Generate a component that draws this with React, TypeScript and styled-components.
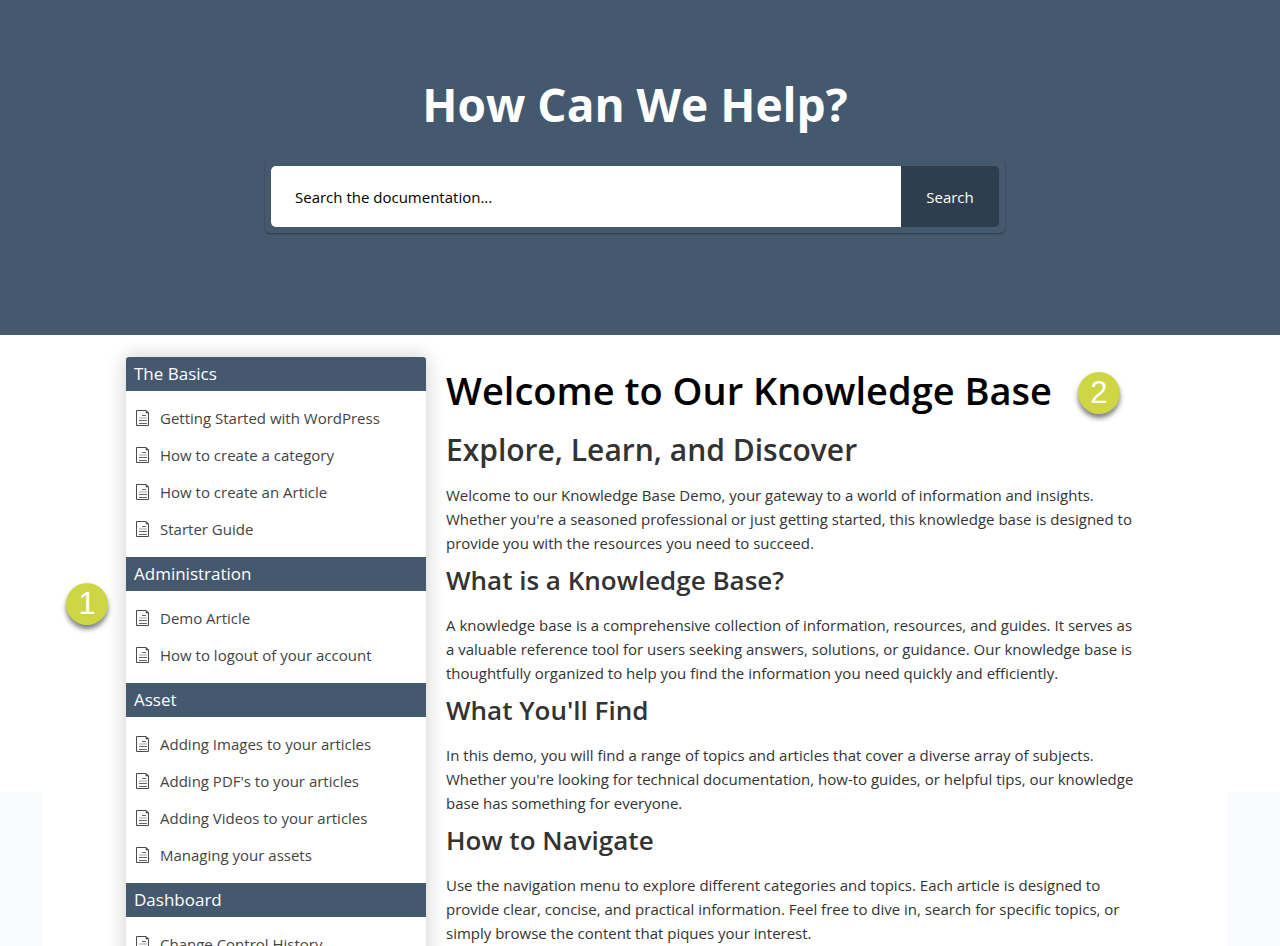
import React from "react";
import styled, { createGlobalStyle } from "styled-components";

const slate = "#44586e";

const GlobalStyle = createGlobalStyle`
  * { box-sizing: border-box; }
  body {
    margin: 0;
    background: #fafbff;
    color: #333;
    font: 15px/24px "Open Sans", "Noto Sans", sans-serif;
  }
`;

const Page = styled.div`
  height: 100vh;
  overflow: hidden;
`;

const Hero = styled.header`
  display: flex;
  flex-direction: column;
  align-items: center;
  padding: 72px 10px 102px 0;
  background: ${slate};
`;

const HeroTitle = styled.h1`
  margin: 0 0 24px;
  color: #fff;
  font-size: 46px;
  line-height: 64px;
  font-weight: 700;
`;

const SearchForm = styled.form`
  display: flex;
  width: 100%;
  max-width: 740px;
  padding: 6px;
  border-radius: 5px;
  box-shadow: 0 1px 2px rgba(0, 0, 0, 0.35);
`;

const SearchInput = styled.input`
  flex: 1;
  min-width: 0;
  height: 61px;
  padding: 0 24px;
  border: 0;
  border-radius: 5px 0 0 5px;
  background: #fff;
  font: inherit;
  color: #000;
  &::placeholder {
    color: #000;
    opacity: 1;
  }
`;

const SearchButton = styled.button`
  width: 98px;
  padding: 0;
  border: 0;
  border-radius: 0 5px 5px 0;
  background: #2f3e4e;
  color: #fff;
  font: inherit;
`;

const Body = styled.main`
  padding-right: 10px;
  background: linear-gradient(#fff, #fff) top / 100% 457px no-repeat;
`;

const Sheet = styled.div`
  max-width: 1184px;
  margin: 0 auto;
  padding: 22px 83px 40px;
  background: #fff;
`;

const Columns = styled.div`
  display: flex;
  align-items: flex-start;
  gap: 20px;
`;

const Sidebar = styled.nav`
  position: relative;
  flex: none;
  width: 300px;
  border-radius: 3px;
  background: #fff;
  box-shadow: 0 0 20px rgba(0, 0, 0, 0.2);
`;

const GroupTitle = styled.h2`
  margin: 0;
  padding: 0 8px;
  background: ${slate};
  color: #fff;
  font-size: 17px;
  line-height: 34px;
  font-weight: 400;
  section:first-of-type > & {
    border-radius: 3px 3px 0 0;
  }
`;

const ArticleList = styled.ul`
  margin: 0;
  padding: 8px 10px 10px;
  list-style: none;
`;

const ArticleLink = styled.a`
  display: flex;
  align-items: center;
  gap: 10px;
  height: 37px;
  color: #444;
  text-decoration: none;
  white-space: nowrap;
`;

const Article = styled.article`
  flex: 1;
  min-width: 0;
  padding-top: 9px;
`;

const TitleRow = styled.div`
  display: flex;
  align-items: flex-end;
  gap: 26px;
`;

const Title = styled.h1`
  margin: 0;
  color: #000;
  font-size: 38px;
  line-height: 48px;
  font-weight: 600;
`;

const Subtitle = styled.h2`
  margin: 17px 0 14px;
  font-size: 30px;
  line-height: 38px;
  font-weight: 600;
`;

const SectionTitle = styled.h3`
  margin: 8px 0 16px;
  font-size: 26px;
  line-height: 34px;
  font-weight: 600;
`;

const Text = styled.p`
  margin: 0;
`;

const Badge = styled.span`
  flex: none;
  width: 42px;
  height: 42px;
  border-radius: 50%;
  background: #ced644;
  box-shadow: 0 4px 5px rgba(0, 0, 0, 0.5);
  color: #fff;
  font: 31px/42px "Liberation Sans", sans-serif;
  text-align: center;
`;

const SidebarBadge = styled(Badge)`
  position: absolute;
  top: 226px;
  left: -60px;
`;

const DocIcon = () => (
  <svg width="14" height="16" viewBox="0 0 14 16" fill="none" stroke="#4a4a4a" aria-hidden="true">
    <path d="M.5.5H10L12.5 3V15.5H.5Z" />
    <path d="M10 .5V3H12.5Z" fill="#4a4a4a" strokeOpacity=".6" />
    <path d="M6 5.5H10M3 10.5H11M3 13.5H11" strokeOpacity=".85" />
    <path d="M3 8H11" strokeOpacity=".5" />
  </svg>
);

const groups = [
  {
    title: "The Basics",
    items: ["Getting Started with WordPress", "How to create a category", "How to create an Article", "Starter Guide"],
  },
  { title: "Administration", items: ["Demo Article", "How to logout of your account"] },
  {
    title: "Asset",
    items: [
      "Adding Images to your articles",
      "Adding PDF's to your articles",
      "Adding Videos to your articles",
      "Managing your assets",
    ],
  },
  { title: "Dashboard", items: ["Change Control History"] },
];

const sections = [
  {
    title: "What is a Knowledge Base?",
    text: "A knowledge base is a comprehensive collection of information, resources, and guides. It serves as a valuable reference tool for users seeking answers, solutions, or guidance. Our knowledge base is thoughtfully organized to help you find the information you need quickly and efficiently.",
  },
  {
    title: "What You'll Find",
    text: "In this demo, you will find a range of topics and articles that cover a diverse array of subjects. Whether you're looking for technical documentation, how-to guides, or helpful tips, our knowledge base has something for everyone.",
  },
  {
    title: "How to Navigate",
    text: "Use the navigation menu to explore different categories and topics. Each article is designed to provide clear, concise, and practical information. Feel free to dive in, search for specific topics, or simply browse the content that piques your interest.",
  },
];

export default function App() {
  return (
    <Page>
      <GlobalStyle />
      <Hero>
        <HeroTitle>How Can We Help?</HeroTitle>
        <SearchForm role="search" onSubmit={(e) => e.preventDefault()}>
          <SearchInput type="text" aria-label="Search the documentation" placeholder="Search the documentation..." />
          <SearchButton type="submit">Search</SearchButton>
        </SearchForm>
      </Hero>
      <Body>
        <Sheet>
          <Columns>
            <Sidebar>
              {groups.map((group) => (
                <section key={group.title}>
                  <GroupTitle>{group.title}</GroupTitle>
                  <ArticleList>
                    {group.items.map((item) => (
                      <li key={item}>
                        <ArticleLink href="#">
                          <DocIcon />
                          {item}
                        </ArticleLink>
                      </li>
                    ))}
                  </ArticleList>
                </section>
              ))}
              <SidebarBadge>1</SidebarBadge>
            </Sidebar>
            <Article>
              <TitleRow>
                <Title>Welcome to Our Knowledge Base</Title>
                <Badge>2</Badge>
              </TitleRow>
              <Subtitle>Explore, Learn, and Discover</Subtitle>
              <Text>
                Welcome to our Knowledge Base Demo, your gateway to a world of information and insights. Whether
                you're a seasoned professional or just getting started, this knowledge base is designed to provide you
                with the resources you need to succeed.
              </Text>
              {sections.map((section) => (
                <React.Fragment key={section.title}>
                  <SectionTitle>{section.title}</SectionTitle>
                  <Text>{section.text}</Text>
                </React.Fragment>
              ))}
            </Article>
          </Columns>
        </Sheet>
      </Body>
    </Page>
  );
}
